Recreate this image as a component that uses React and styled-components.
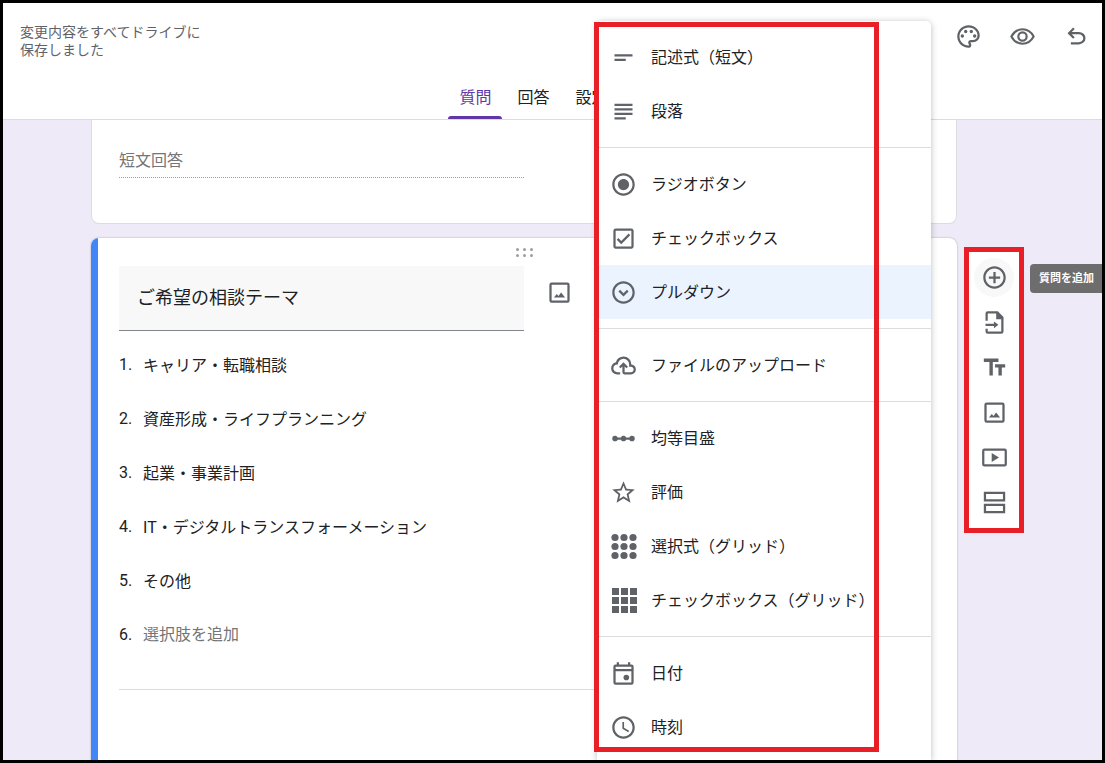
import React from "react";
import styled, { createGlobalStyle, css } from "styled-components";
import {
  MdShortText,
  MdSubject,
  MdRadioButtonChecked,
  MdOutlineCheckBox,
  MdOutlineExpandCircleDown,
  MdLinearScale,
  MdStarBorder,
  MdAccessTime,
  MdAddCircleOutline,
  MdTextFields,
  MdOutlinePalette,
} from "react-icons/md";

const color = {
  text: "#202124",
  muted: "#757575",
  icon: "#5f6368",
  line: "#dadce0",
  canvas: "#eeeaf8",
  accent: "#5f37a8",
  focus: "#4285f4",
  selected: "#ebf3fe",
  callout: "#e81f27",
};

const GlobalStyle = createGlobalStyle`
  *, *::before, *::after { box-sizing: border-box; }
  body {
    margin: 0;
    color: ${color.text};
    font-family: Roboto, "Noto Sans CJK JP", sans-serif;
    font-size: 16px;
  }
  button, input { font: inherit; color: inherit; }
`;

const Frame = styled.div`
  position: relative;
  display: flex;
  flex-direction: column;
  height: 100vh;
  overflow: hidden;
  border: 3px solid #000;
  background: ${color.canvas};
`;

const Header = styled.header`
  flex: none;
  background: #fff;
  border-bottom: 1px solid ${color.line};
`;

const HeaderTop = styled.div`
  display: flex;
  justify-content: space-between;
  align-items: flex-start;
  padding: 20px 12px 0 17px;
`;

const SaveStatus = styled.p`
  margin: 0;
  color: ${color.icon};
  font-size: 14px;
  line-height: 18px;
`;

const Actions = styled.div`
  display: flex;
  gap: 27px;
`;

const IconButton = styled.button`
  display: grid;
  place-items: center;
  padding: 0;
  border: 0;
  background: none;
  color: ${color.icon};
  cursor: pointer;
`;

const Tabs = styled.nav`
  display: flex;
  justify-content: center;
  gap: 4px;
  margin-top: 18px;
  padding-right: 38px;
`;

const Tab = styled.button`
  position: relative;
  height: 42px;
  padding: 0 11px;
  border: 0;
  background: none;
  line-height: 42px;
  cursor: pointer;

  ${(p) =>
    p.$active &&
    css`
      color: ${color.accent};
      &::after {
        content: "";
        position: absolute;
        inset: auto 0 0;
        height: 3px;
        border-radius: 3px 3px 0 0;
        background: ${color.accent};
      }
    `}
`;

const Workspace = styled.main`
  flex: 1;
  display: grid;
  grid-template-columns: minmax(0, 1fr) 138px;
  column-gap: 7px;
  min-height: 0;
  padding-left: 88px;
`;

const Cards = styled.div`
  display: flex;
  flex-direction: column;
  gap: 14px;
  min-height: 0;
`;

const ShortAnswerCard = styled.section`
  padding: 24px 27px 45px;
  border: 1px solid ${color.line};
  border-top: 0;
  border-radius: 0 0 8px 8px;
  background: #fff;
`;

const ShortAnswer = styled.input`
  display: block;
  width: 405px;
  max-width: 100%;
  height: 34px;
  padding: 0;
  border: 0;
  border-bottom: 1px dotted #9e9e9e;
  background: none;
  &::placeholder { color: ${color.muted}; opacity: 1; }
`;

const QuestionCard = styled.section`
  flex: 1;
  display: flex;
  min-height: 0;
  overflow: hidden;
  border-radius: 8px 8px 0 0;
  background: #fff;
  box-shadow: 0 0 2px rgba(60, 64, 67, 0.4);
`;

const ActiveBar = styled.div`
  flex: none;
  width: 7px;
  background: ${color.focus};
`;

const QuestionBody = styled.div`
  flex: 1;
  min-width: 0;
  padding: 0 28px 0 21px;
`;

const DragHandle = styled.div`
  display: flex;
  justify-content: center;
  height: 28px;
  padding-top: 10px;
`;

const TitleRow = styled.div`
  display: grid;
  grid-template-columns: minmax(0, 405px) auto;
  justify-content: start;
  align-items: start;
  column-gap: 22px;
`;

const TitleInput = styled.input`
  height: 65px;
  padding: 0 18px 4px;
  border: 0;
  border-bottom: 1px solid #80868b;
  background: #f8f8f8;
  font-size: 18px;
`;

const TitleImageButton = styled(IconButton)`
  height: 53px;
`;

const Options = styled.ol`
  margin: 6px 0 0;
  padding: 0 0 28px;
  border-bottom: 1px solid ${color.line};
  list-style: none;
`;

const Option = styled.li`
  display: grid;
  grid-template-columns: 24px minmax(0, 405px);
  align-items: center;
  height: 54px;
`;

const OptionInput = styled.input`
  height: 36px;
  padding: 0;
  border: 0;
  background: none;
  &::placeholder { color: ${color.muted}; opacity: 1; }
`;

const Rail = styled.aside`
  display: flex;
  align-items: flex-start;
  gap: 6px;
  padding-top: 127px;
`;

const Toolbar = styled.div`
  flex: none;
  display: flex;
  flex-direction: column;
  width: 60px;
  padding: 3px 0;
  border: 5px solid ${color.callout};
  background: #fff;
`;

const ToolButton = styled(IconButton)`
  align-self: center;
  width: 40px;
  height: 39px;
  margin: 3px 0;
  border-radius: 50%;
  background: ${(p) => (p.$active ? "#f8f8f8" : "none")};
`;

const Tooltip = styled.span`
  flex: 1;
  margin-top: 17px;
  padding-left: 9px;
  border-radius: 4px 0 0 4px;
  background: #6d6d6d;
  color: #fff;
  font-size: 11px;
  font-weight: 700;
  line-height: 29px;
  white-space: nowrap;
`;

const TypeMenu = styled.div`
  position: absolute;
  top: 18px;
  right: 171px;
  bottom: 0;
  width: 334px;
  padding-top: 9px;
  border-radius: 5px 5px 0 0;
  background: #fff;
  box-shadow: 0 1px 6px rgba(60, 64, 67, 0.35);
`;

const MenuGroup = styled.div`
  & + & {
    margin-top: 9px;
    padding-top: 9px;
    border-top: 1px solid ${color.line};
  }
`;

const MenuItem = styled.button`
  display: flex;
  align-items: center;
  gap: 14px;
  width: 100%;
  height: 54px;
  padding: 0 0 0 13px;
  border: 0;
  background: ${(p) => (p.$selected ? color.selected : "none")};
  text-align: left;
  white-space: nowrap;
  cursor: pointer;

  svg { flex: none; color: ${color.icon}; }
`;

const MenuLabel = styled.span`
  padding-bottom: 3px;
`;

const MenuCallout = styled.div`
  position: absolute;
  inset: 1px 52px 8px -3px;
  border: 5px solid ${color.callout};
  pointer-events: none;
`;

const Svg = ({ size = 27, box = "0 0 24 24", children }) => (
  <svg width={size} height={size} viewBox={box} fill="currentColor" aria-hidden="true">
    {children}
  </svg>
);

const ImageIcon = () => (
  <Svg>
    <rect x="4" y="4" width="16" height="16" rx="1" fill="none" stroke="currentColor" strokeWidth="2" />
    <path d="M7 16.5l2.6-3.2 1.5 1.7 2.3-3 3.6 4.5z" />
  </Svg>
);

const EyeIcon = () => (
  <Svg>
    <path d="M12 5.600c4.100 0 7.700 2.300 9.900 6.400-2.200 4.100-5.800 6.400-9.900 6.400S4.300 16.100 2.100 12C4.300 7.900 7.900 5.600 12 5.600z" fill="none" stroke="currentColor" strokeWidth="1.9" strokeLinejoin="round" />
    <circle cx="12" cy="12" r="3.7" fill="none" stroke="currentColor" strokeWidth="1.9" />
  </Svg>
);

const UndoIcon = () => (
  <Svg box="0 -960 960 960">
    <path d="M280-200v-80h284q63 0 109.500-40T720-420q0-60-46.500-100T564-560H312l104 104-56 56-200-200 200-200 56 56-104 104h252q97 0 169.500 63T800-420q0 94-72.500 157T564-200H280Z" />
  </Svg>
);

const CloudIcon = () => (
  <Svg box="0 -960 960 960">
    <path d="M260-160q-91 0-155.500-63T40-377q0-78 47-139t123-78q25-92 100-149t170-57q117 0 198.500 81.500T760-520q69 8 114.500 59.500T920-340q0 75-52.500 127.500T740-160H520q-33 0-56.500-23.500T440-240v-206l-64 62-56-56 160-160 160 160-56 56-64-62v206h220q42 0 71-29t29-71q0-42-29-71t-71-29h-60v-80q0-83-58.500-141.500T480-720q-83 0-141.500 58.500T280-520h-20q-58 0-99 41t-41 99q0 58 41 99t99 41h100v80H260Z" />
  </Svg>
);

const steps = [0, 9, 18];

const DotGridIcon = () => (
  <Svg box="0 0 27 27">
    {steps.map((y) => steps.map((x) => <circle key={`${x}-${y}`} cx={x + 5} cy={y + 4.5} r="3.6" />))}
  </Svg>
);

const SquareGridIcon = () => (
  <Svg box="0 0 27 27">
    {steps.map((y) => steps.map((x) => <rect key={`${x}-${y}`} x={x + 2} y={y + 1} width="7" height="7" />))}
  </Svg>
);

const CalendarIcon = () => (
  <Svg>
    <path d="M19 4h-1V2h-2v2H8V2H6v2H5a2 2 0 0 0-2 2v14a2 2 0 0 0 2 2h14a2 2 0 0 0 2-2V6a2 2 0 0 0-2-2zm0 16H5V10h14v10zm0-12H5V6h14v2z" />
    <circle cx="14.5" cy="15.5" r="2.5" />
  </Svg>
);

const ImportIcon = () => (
  <Svg>
    <path d="M5 10.500V4a1 1 0 0 1 1-1h8.500L19 7.500V20a1 1 0 0 1-1 1H6a1 1 0 0 1-1-1v-2.500" fill="none" stroke="currentColor" strokeWidth="2" />
    <path d="M13.500 2.500V9H20z" />
    <path d="M4 13.200h7.500V11l4 3.100-4 3.100V15H4z" />
  </Svg>
);

const VideoIcon = () => (
  <Svg>
    <rect x="2" y="5" width="20" height="14" rx="1" fill="none" stroke="currentColor" strokeWidth="2" />
    <path d="M9.500 8v8l6.500-4z" />
  </Svg>
);

const SectionIcon = () => (
  <Svg>
    <path d="M3.500 3.500h17v6.500h-17zM3.500 14h17v6.500h-17z" fill="none" stroke="currentColor" strokeWidth="2" />
  </Svg>
);

const DragIcon = () => (
  <svg width="17" height="10" viewBox="0 0 17 10" fill="#9e9e9e" aria-hidden="true">
    {[1.5, 7.5].map((y) => [1.5, 8.5, 15.5].map((x) => <circle key={`${x}-${y}`} cx={x} cy={y} r="1.5" />))}
  </svg>
);

const menuGroups = [
  [
    ["記述式（短文）", MdShortText],
    ["段落", MdSubject],
  ],
  [
    ["ラジオボタン", MdRadioButtonChecked],
    ["チェックボックス", MdOutlineCheckBox],
    ["プルダウン", MdOutlineExpandCircleDown],
  ],
  [["ファイルのアップロード", CloudIcon]],
  [
    ["均等目盛", MdLinearScale],
    ["評価", MdStarBorder],
    ["選択式（グリッド）", DotGridIcon],
    ["チェックボックス（グリッド）", SquareGridIcon],
  ],
  [
    ["日付", CalendarIcon],
    ["時刻", MdAccessTime],
  ],
];

const options = [
  "キャリア・転職相談",
  "資産形成・ライフプランニング",
  "起業・事業計画",
  "IT・デジタルトランスフォーメーション",
  "その他",
];

const tools = [
  ["質問を追加", MdAddCircleOutline],
  ["質問をインポート", ImportIcon],
  ["タイトルと説明を追加", MdTextFields],
  ["画像を追加", ImageIcon],
  ["動画を追加", VideoIcon],
  ["セクションを追加", SectionIcon],
];

export default function App() {
  return (
    <>
      <GlobalStyle />
      <Frame lang="ja">
        <Header>
          <HeaderTop>
            <SaveStatus>
              変更内容をすべてドライブに
              <br />
              保存しました
            </SaveStatus>
            <Actions>
              <IconButton aria-label="テーマをカスタマイズ"><MdOutlinePalette size={27} /></IconButton>
              <IconButton aria-label="プレビュー"><EyeIcon /></IconButton>
              <IconButton aria-label="元に戻す"><UndoIcon /></IconButton>
            </Actions>
          </HeaderTop>
          <Tabs>
            <Tab $active aria-current="page">質問</Tab>
            <Tab>回答</Tab>
            <Tab>設定</Tab>
          </Tabs>
        </Header>

        <Workspace>
          <Cards>
            <ShortAnswerCard>
              <ShortAnswer aria-label="短文回答" placeholder="短文回答" />
            </ShortAnswerCard>
            <QuestionCard>
              <ActiveBar />
              <QuestionBody>
                <DragHandle><DragIcon /></DragHandle>
                <TitleRow>
                  <TitleInput aria-label="質問" defaultValue="ご希望の相談テーマ" />
                  <TitleImageButton aria-label="画像を追加"><ImageIcon /></TitleImageButton>
                </TitleRow>
                <Options>
                  {options.map((label, i) => (
                    <Option key={label}>
                      <span>{i + 1}.</span>
                      <OptionInput aria-label={`選択肢 ${i + 1}`} defaultValue={label} />
                    </Option>
                  ))}
                  <Option>
                    <span>{options.length + 1}.</span>
                    <OptionInput aria-label="選択肢を追加" placeholder="選択肢を追加" />
                  </Option>
                </Options>
              </QuestionBody>
            </QuestionCard>
          </Cards>

          <Rail>
            <Toolbar role="toolbar" aria-label="フォームの編集">
              {tools.map(([label, Icon], i) => (
                <ToolButton key={label} aria-label={label} $active={i === 0}>
                  <Icon size={27} />
                </ToolButton>
              ))}
            </Toolbar>
            <Tooltip role="tooltip">質問を追加</Tooltip>
          </Rail>
        </Workspace>

        <TypeMenu role="menu" aria-label="質問の形式">
          {menuGroups.map((group) => (
            <MenuGroup role="group" key={group[0][0]}>
              {group.map(([label, Icon]) => (
                <MenuItem role="menuitem" key={label} $selected={label === "プルダウン"}>
                  <Icon size={27} />
                  <MenuLabel>{label}</MenuLabel>
                </MenuItem>
              ))}
            </MenuGroup>
          ))}
          <MenuCallout />
        </TypeMenu>
      </Frame>
    </>
  );
}
